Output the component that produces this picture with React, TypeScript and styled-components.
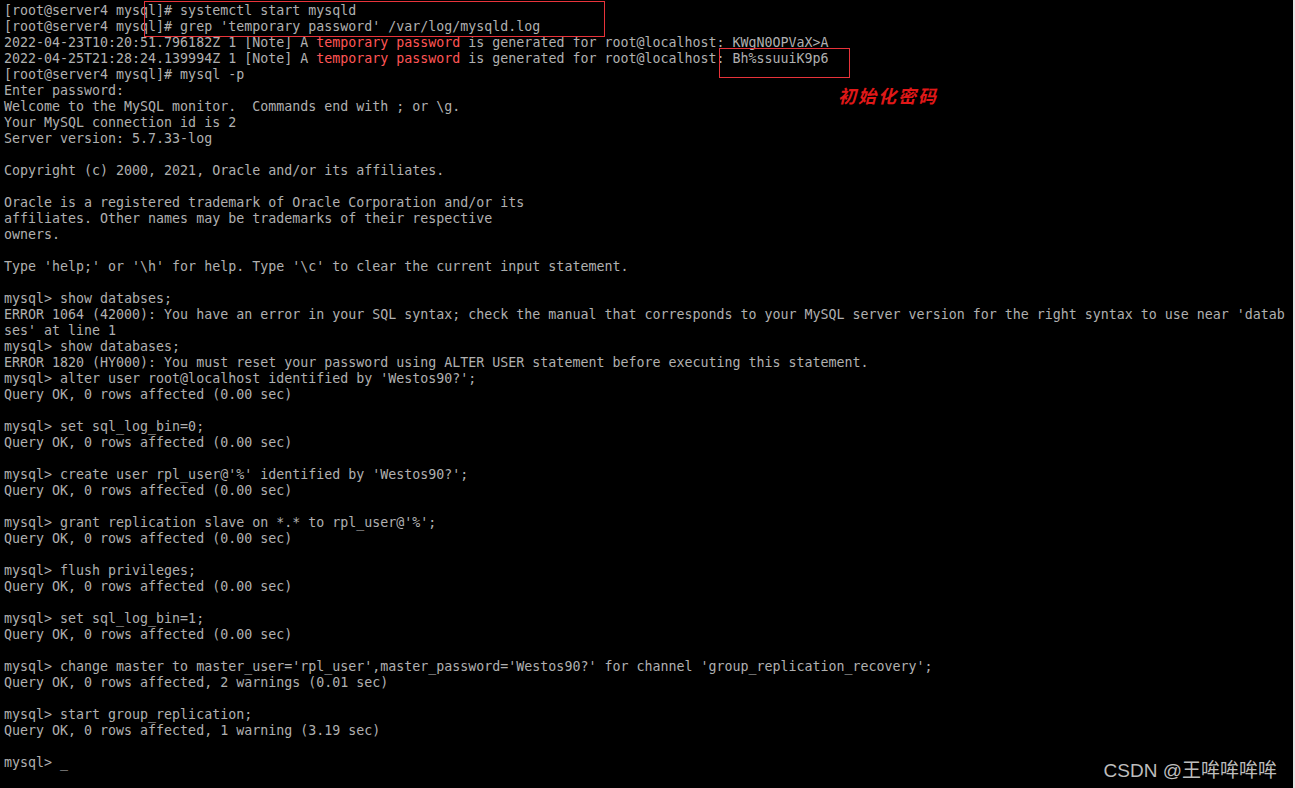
import styled, { createGlobalStyle } from "styled-components";

const GlobalStyle = createGlobalStyle`
    html, body {
        margin: 0;
        padding: 0;
        background: #000;
        overflow: hidden;
    }
`

const Page = styled.div`
    display: flex;
    width: 1295px;
    height: 788px;
`

const Screen = styled.div`
    position: relative;
    flex: 1;
    background: #000;
    padding: 3px 0 0 4px;
    display: flex;
    flex-direction: column;
    overflow: hidden;
`

const Edge = styled.div`
    width: 2px;
    background: #e4e4e4;
`

const Line = styled.div`
    height: 16px;
    line-height: 16px;
    white-space: pre;
    font-family: "DejaVu Sans Mono", "Liberation Mono", monospace;
    font-size: 13.3px;
    color: #b0b0b0;
`

const Hl = styled.span`
    color: #ff5555;
`

// red annotation boxes drawn over the console
const Mark = styled.div`
    position: absolute;
    border: 1px solid #e8333a;
    left: ${(p: { $x: number; $y: number; $w: number; $h: number }) => p.$x}px;
    top: ${(p) => p.$y}px;
    width: ${(p) => p.$w}px;
    height: ${(p) => p.$h}px;
    box-sizing: border-box;
`

const Note = styled.div`
    position: absolute;
    left: 838px;
    top: 82px;
    font-family: "Noto Sans CJK SC", sans-serif;
    font-size: 18px;
    font-weight: 700;
    font-style: italic;
    letter-spacing: 2px;
    color: #e01818;
`

const Watermark = styled.div`
    position: absolute;
    right: 16px;
    bottom: 6px;
    font-family: "Liberation Sans", "Noto Sans CJK SC", sans-serif;
    font-size: 19px;
    color: #bdbdbd;
`

const lines: (string | [string, string, string])[] = [
    "[root@server4 mysql]# systemctl start mysqld",
    "[root@server4 mysql]# grep 'temporary password' /var/log/mysqld.log",
    ["2022-04-23T10:20:51.796182Z 1 [Note] A ", "temporary password", " is generated for root@localhost: KWgN0OPVaX>A"],
    ["2022-04-25T21:28:24.139994Z 1 [Note] A ", "temporary password", " is generated for root@localhost: Bh%ssuuiK9p6"],
    "[root@server4 mysql]# mysql -p",
    "Enter password:",
    "Welcome to the MySQL monitor.  Commands end with ; or \\g.",
    "Your MySQL connection id is 2",
    "Server version: 5.7.33-log",
    "",
    "Copyright (c) 2000, 2021, Oracle and/or its affiliates.",
    "",
    "Oracle is a registered trademark of Oracle Corporation and/or its",
    "affiliates. Other names may be trademarks of their respective",
    "owners.",
    "",
    "Type 'help;' or '\\h' for help. Type '\\c' to clear the current input statement.",
    "",
    "mysql> show databses;",
    "ERROR 1064 (42000): You have an error in your SQL syntax; check the manual that corresponds to your MySQL server version for the right syntax to use near 'datab",
    "ses' at line 1",
    "mysql> show databases;",
    "ERROR 1820 (HY000): You must reset your password using ALTER USER statement before executing this statement.",
    "mysql> alter user root@localhost identified by 'Westos90?';",
    "Query OK, 0 rows affected (0.00 sec)",
    "",
    "mysql> set sql_log_bin=0;",
    "Query OK, 0 rows affected (0.00 sec)",
    "",
    "mysql> create user rpl_user@'%' identified by 'Westos90?';",
    "Query OK, 0 rows affected (0.00 sec)",
    "",
    "mysql> grant replication slave on *.* to rpl_user@'%';",
    "Query OK, 0 rows affected (0.00 sec)",
    "",
    "mysql> flush privileges;",
    "Query OK, 0 rows affected (0.00 sec)",
    "",
    "mysql> set sql_log_bin=1;",
    "Query OK, 0 rows affected (0.00 sec)",
    "",
    "mysql> change master to master_user='rpl_user',master_password='Westos90?' for channel 'group_replication_recovery';",
    "Query OK, 0 rows affected, 2 warnings (0.01 sec)",
    "",
    "mysql> start group_replication;",
    "Query OK, 0 rows affected, 1 warning (3.19 sec)",
    "",
    "mysql> _",
]

const App = () => (
    <>
        <GlobalStyle />
        <Page>
            <Screen>
                {lines.map((l, i) =>
                    typeof l === "string" ? (
                        <Line key={i}>{l}</Line>
                    ) : (
                        <Line key={i}>{l[0]}<Hl>{l[1]}</Hl>{l[2]}</Line>
                    )
                )}
                <Mark $x={144} $y={1} $w={461} $h={36} />
                <Mark $x={719} $y={48} $w={131} $h={30} />
                <Note>初始化密码</Note>
                <Watermark>CSDN @王哞哞哞哞</Watermark>
            </Screen>
            <Edge />
        </Page>
    </>
)

export default App;
